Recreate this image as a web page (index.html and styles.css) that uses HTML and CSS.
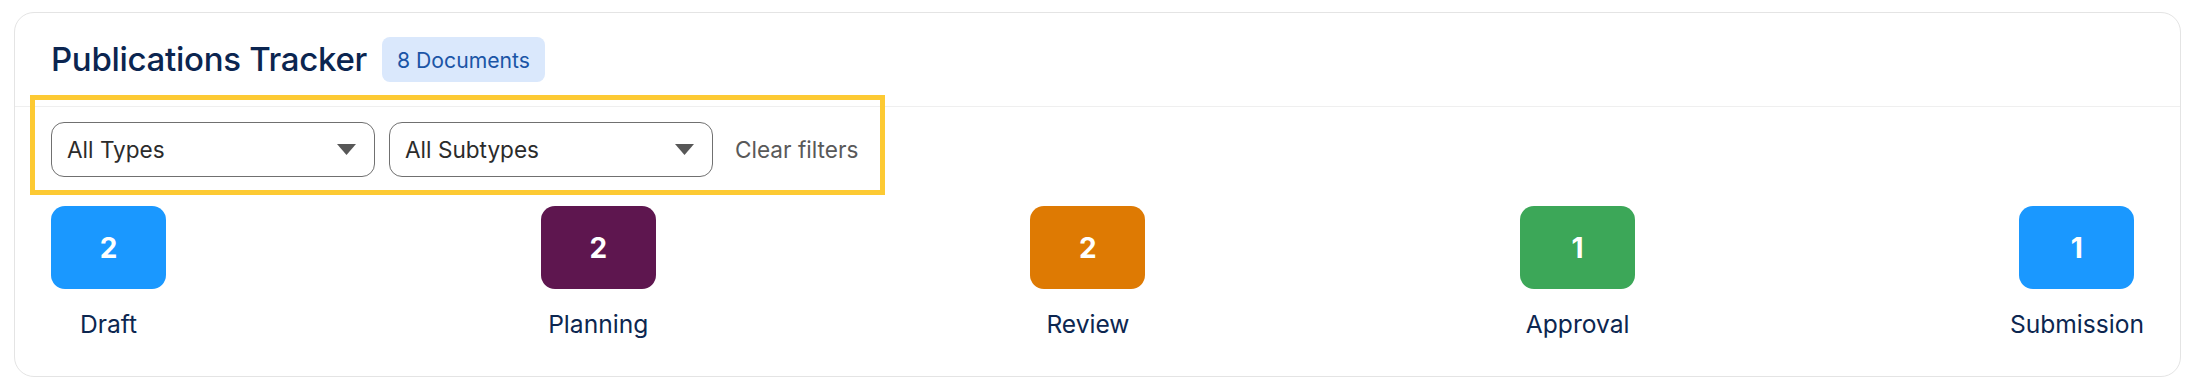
FILE: index.html
```html
<!DOCTYPE html>
<html lang="en">
<head>
<meta charset="utf-8">
<title>Publications Tracker</title>
<link rel="stylesheet" href="styles.css">
</head>
<body>
<div class="page">
  <section class="card">
    <header class="card-header">
      <h1 class="title">Publications Tracker</h1>
      <span class="badge">8 Documents</span>
    </header>
    <div class="card-body">
      <div class="filters">
        <div class="select">
          <span class="select-label">All Types</span>
          <svg class="caret" width="19" height="11" viewBox="0 0 19 11"><path d="M0 0H19L9.5 11Z" fill="#575757"/></svg>
        </div>
        <div class="select">
          <span class="select-label">All Subtypes</span>
          <svg class="caret" width="19" height="11" viewBox="0 0 19 11"><path d="M0 0H19L9.5 11Z" fill="#575757"/></svg>
        </div>
        <button class="clear">Clear filters</button>
      </div>
      <div class="stages">
        <div class="stage">
          <div class="count count-draft">2</div>
          <div class="stage-label">Draft</div>
        </div>
        <div class="stage">
          <div class="count count-planning">2</div>
          <div class="stage-label">Planning</div>
        </div>
        <div class="stage">
          <div class="count count-review">2</div>
          <div class="stage-label">Review</div>
        </div>
        <div class="stage">
          <div class="count count-approval">1</div>
          <div class="stage-label">Approval</div>
        </div>
        <div class="stage">
          <div class="count count-submission">1</div>
          <div class="stage-label">Submission</div>
        </div>
      </div>
    </div>
    <div class="highlight"></div>
  </section>
</div>
</body>
</html>
```

FILE: styles.css
```css
* { box-sizing: border-box; }

html, body {
  margin: 0;
  padding: 0;
  background: #ffffff;
}

body {
  font-family: Inter, "Noto Sans", "Liberation Sans", sans-serif;
  color: #0c2650;
}

.page {
  padding: 12px 11px 0 14px;
}

.card {
  position: relative;
  height: 365px;
  border: 1px solid #e4e4e4;
  border-radius: 20px;
  background: #ffffff;
}

.card-header {
  display: flex;
  align-items: center;
  gap: 15px;
  height: 94px;
  padding: 0 36px;
  border-bottom: 1px solid #efefef;
}

.title {
  margin: 0;
  font-size: 33px;
  font-weight: 500;
  letter-spacing: -0.3px;
  color: #0b2550;
  line-height: 1;
}

.badge {
  display: inline-flex;
  align-items: center;
  height: 45px;
  padding: 0 15px;
  border-radius: 8px;
  background: #dae8fc;
  color: #1b55a6;
  font-size: 21.2px;
  font-weight: 400;
}

.card-body {
  padding: 15px 36px 0 36px;
}

.filters {
  display: flex;
  align-items: center;
  gap: 14px;
}

.select {
  display: flex;
  align-items: center;
  justify-content: space-between;
  width: 324px;
  height: 55px;
  padding: 0 18px 0 15px;
  border: 1px solid #707070;
  border-radius: 13px;
  background: #ffffff;
}

.select-label {
  font-size: 22.6px;
  color: #2b2b2b;
}

.caret {
  display: block;
  flex: none;
}

.clear {
  margin-left: 8px;
  padding: 0;
  border: none;
  background: none;
  font-family: inherit;
  font-size: 22.6px;
  color: #595959;
}

.stages {
  display: flex;
  justify-content: space-between;
  margin-top: 29px;
}

.stage {
  display: flex;
  flex-direction: column;
  align-items: center;
}

.count {
  display: flex;
  align-items: center;
  justify-content: center;
  width: 115px;
  height: 83px;
  border-radius: 14px;
  color: #ffffff;
  font-size: 28px;
  font-weight: 700;
}

.count-draft { background: #1a98ff; }
.count-planning { background: #5e164f; }
.count-review { background: #de7a03; }
.count-approval { background: #3ca758; }
.count-submission { background: #1a98ff; }

.stage-label {
  margin-top: 20px;
  font-size: 24.6px;
  line-height: 30px;
  color: #0c2650;
}

.highlight {
  position: absolute;
  left: 15px;
  top: 82px;
  width: 855px;
  height: 100px;
  border: 5px solid #fdca33;
  pointer-events: none;
}
```
